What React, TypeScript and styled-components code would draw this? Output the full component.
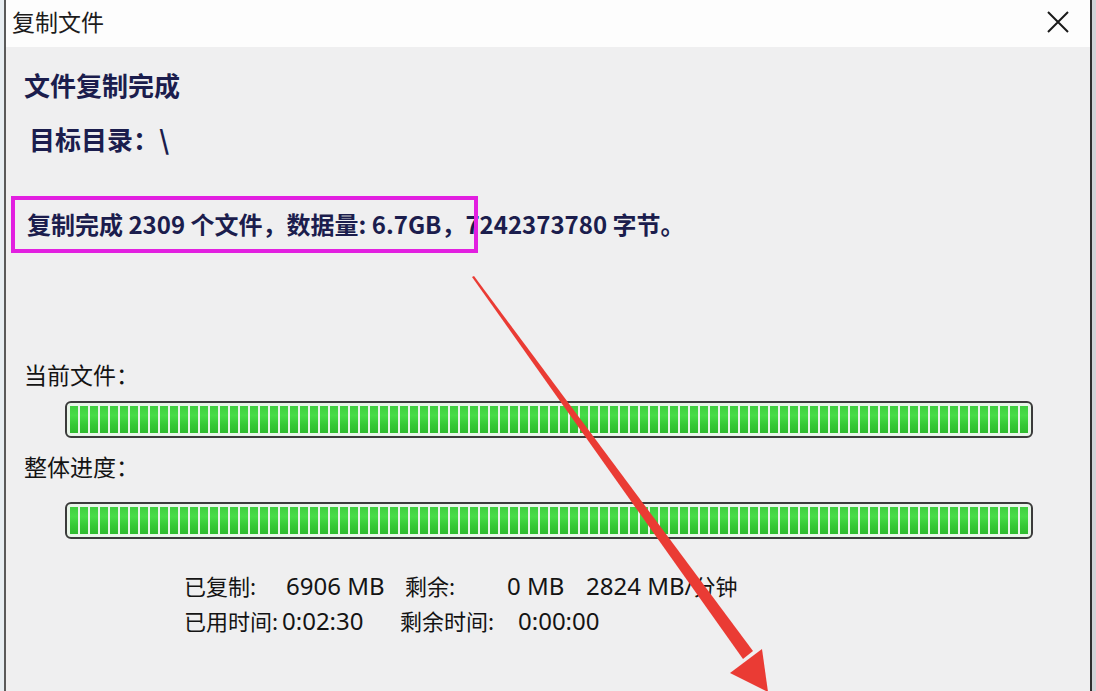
import React from 'react';
import styled, { createGlobalStyle } from 'styled-components';

const GlobalStyle = createGlobalStyle`
  html, body {
    margin: 0;
    padding: 0;
    width: 1096px;
    height: 691px;
    overflow: hidden;
    background: #d6d8dc;
  }
  #root {
    width: 1096px;
    height: 691px;
  }
`;

const Page = styled.div`
  position: relative;
  display: flex;
  width: 1096px;
  height: 691px;
  font-family: 'Noto Sans', 'Noto Sans CJK SC', sans-serif;
`;

const BackStrip = styled.div<{ $w: number; $bg: string }>`
  width: ${(p) => p.$w}px;
  background: ${(p) => p.$bg};
  flex-shrink: 0;
`;

const Window = styled.div`
  flex: 1;
  display: flex;
  flex-direction: column;
  border-left: 2px solid #5a5a5a;
  border-right: 2px solid #2e2e2e;
  background: #efeff0;
`;

const TitleBar = styled.div`
  height: 47px;
  background: #fdfdfd;
  display: flex;
  align-items: center;
  justify-content: space-between;
  padding: 0 20px 0 6px;
  flex-shrink: 0;
`;

const TitleText = styled.span`
  margin-top: -6px;
  font-family: 'Noto Sans CJK SC', sans-serif;
  font-size: 23px;
  color: #1c1c1c;
`;

const CloseButton = styled.div`
  width: 24px;
  height: 24px;
  display: flex;
  align-items: center;
  justify-content: center;
  margin-top: -4px;
`;

const Body = styled.div`
  display: flex;
  flex-direction: column;
  padding-left: 18px;
`;

const Heading = styled.div`
  margin-top: 23px;
  font-family: 'Noto Sans CJK SC', sans-serif;
  font-weight: 700;
  font-size: 26px;
  line-height: 30px;
  color: #1b1d4d;
`;

const Target = styled.div`
  margin-top: 23px;
  margin-left: 5px;
  font-family: 'Noto Sans CJK SC', sans-serif;
  font-weight: 700;
  font-size: 26px;
  line-height: 32px;
  color: #1b1d4d;
`;

const Summary = styled.div`
  position: relative;
  margin-top: 55px;
  margin-left: 3px;
  font-family: 'Noto Sans CJK SC', sans-serif;
  font-weight: 700;
  font-size: 24px;
  line-height: 28px;
  color: #1b1d4d;
  white-space: nowrap;
`;

const Highlight = styled.div`
  position: absolute;
  left: -16px;
  top: -14px;
  width: 459px;
  height: 49px;
  border: 4px solid #e21fe0;
  pointer-events: none;
`;

const Label = styled.div<{ $gap: number }>`
  margin-top: ${(p) => p.$gap}px;
  font-family: 'Noto Sans CJK SC', sans-serif;
  font-size: 23px;
  line-height: 28px;
  color: #141414;
`;

const Bar = styled.div<{ $gap: number }>`
  margin-top: ${(p) => p.$gap}px;
  margin-left: 41px;
  width: 968px;
  height: 37px;
  box-sizing: border-box;
  border: 2px solid #3b3b3b;
  border-radius: 6px;
  background: #e9f6e9;
  padding: 3px;
  display: flex;
  gap: 2px;
  overflow: hidden;
`;

const Segment = styled.div`
  flex: 0 0 8px;
  height: 100%;
  background: linear-gradient(
    to bottom,
    #3fcf3f 0%,
    #47dc47 35%,
    #36c836 70%,
    #2fbb2f 100%
  );
`;

const Stats = styled.div`
  margin-top: 29px;
  margin-left: 160px;
  display: flex;
  flex-direction: column;
  font-family: 'Noto Sans CJK SC', sans-serif;
  font-size: 22px;
  line-height: 35px;
  color: #141414;
`;

const StatRow = styled.div`
  display: flex;
  align-items: baseline;
  white-space: pre;
`;

const StatLabel = styled.span<{ $w: number }>`
  width: ${(p) => p.$w}px;
  flex-shrink: 0;
`;

const StatValue = styled.span<{ $w?: number }>`
  width: ${(p) => (p.$w ? `${p.$w}px` : 'auto')};
  flex-shrink: 0;
  font-family: 'Noto Sans', 'Noto Sans CJK SC', sans-serif;
  font-size: 24px;
`;

const Arrow = styled.svg`
  position: absolute;
  left: 0;
  top: 0;
  pointer-events: none;
`;

const ProgressBar: React.FC<{ gap: number }> = ({ gap }) => (
  <Bar $gap={gap}>
    {Array.from({ length: 96 }).map((_, i) => (
      <Segment key={i} />
    ))}
  </Bar>
);

export default function App() {
  return (
    <>
      <GlobalStyle />
      <Page>
        <BackStrip $w={4} $bg="#e8eef2" />
        <Window>
          <TitleBar>
            <TitleText>复制文件</TitleText>
            <CloseButton>
              <svg width="22" height="22" viewBox="0 0 22 22">
                <path d="M1 1 L21 21 M21 1 L1 21" stroke="#1a1a1a" strokeWidth="2" />
              </svg>
            </CloseButton>
          </TitleBar>
          <Body>
            <Heading>文件复制完成</Heading>
            <Target>目标目录：\</Target>
            <Summary>
              复制完成 2309 个文件，数据量: 6.7GB，7242373780 字节。
              <Highlight />
            </Summary>
            <Label $gap={122}>当前文件：</Label>
            <ProgressBar gap={13} />
            <Label $gap={14}>整体进度：</Label>
            <ProgressBar gap={22} />
            <Stats>
              <StatRow>
                <StatLabel $w={102}>已复制:</StatLabel>
                <StatValue $w={119}>6906 MB</StatValue>
                <StatLabel $w={102}>剩余:</StatLabel>
                <StatValue $w={79}>0 MB</StatValue>
                <StatValue>2824 MB/</StatValue>
                <span>分钟</span>
              </StatRow>
              <StatRow>
                <StatLabel $w={98}>已用时间:</StatLabel>
                <StatValue $w={118}>0:02:30</StatValue>
                <StatLabel $w={118}>剩余时间:</StatLabel>
                <StatValue>0:00:00</StatValue>
              </StatRow>
            </Stats>
          </Body>
        </Window>
        <BackStrip $w={4} $bg="#d0d2d6" />
        <Arrow width="1096" height="691" viewBox="0 0 1096 691">
          <polygon points="472,277 474,276 753,651 743,659" fill="#ea3b34" />
          <polygon points="768,692 762,649 730,673" fill="#ea3b34" />
        </Arrow>
      </Page>
    </>
  );
}
